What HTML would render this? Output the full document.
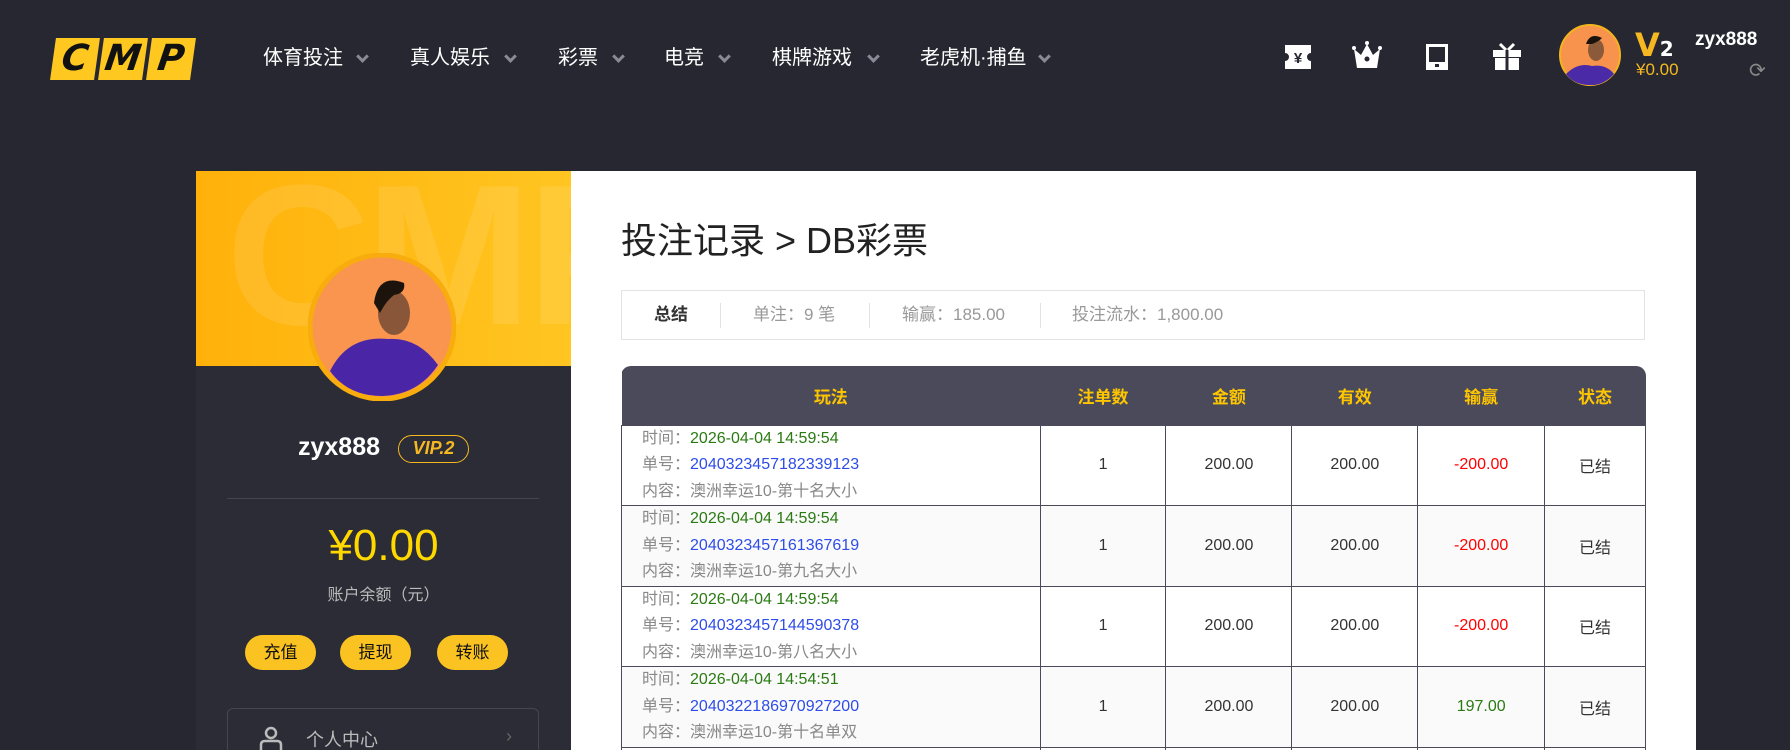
<!DOCTYPE html>
<html><head><meta charset="utf-8"><style>
*{margin:0;padding:0;box-sizing:border-box}
html,body{width:1790px;height:750px;overflow:hidden}
body{background:#272731;font-family:"Liberation Sans","Noto Sans CJK SC",sans-serif;position:relative}
.abs{position:absolute}
.nav{position:absolute;top:45px;color:#fff;font-size:20px;line-height:26px}
.chev{position:absolute;top:52px;width:9px;height:9px;border-right:3px solid #8a8a96;border-bottom:3px solid #8a8a96;transform:rotate(45deg)}
.lg{position:absolute;top:38px;width:44px;height:42px;background:#ffc820;transform:skewX(-8deg);color:#111;font-weight:bold;font-style:italic;font-size:36px;text-align:center;line-height:42px;font-family:"DejaVu Sans",sans-serif}
.btn{position:absolute;width:71px;height:35px;background:#fbc321;border-radius:18px;color:#111;font-size:17px;text-align:center;line-height:35px}
.tw{position:absolute;left:621px;top:366px;width:1025px;height:384px;overflow:hidden;border-radius:10px 10px 0 0}
table{border-collapse:collapse;width:1025px;font-size:16px}
th{background:#4a4a5a;color:#ffc600;height:59px;font-weight:bold;font-size:17px}
td{border:1px solid #4a4a5a;height:79px;text-align:center;color:#333;vertical-align:middle}
td.l{text-align:left;padding-left:20px;line-height:26.5px;color:#888}
.g{color:#2a7a12}.b{color:#2e4ce8}.r{color:#f00}
tr.alt td{background:#fafafa}
</style></head><body>
<div class="lg" style="left:53px">C</div><div class="lg" style="left:101px">M</div><div class="lg" style="left:149px">P</div>
<div class="nav" style="left:263px">体育投注</div><div class="chev" style="left:358px"></div>
<div class="nav" style="left:410px">真人娱乐</div><div class="chev" style="left:506px"></div>
<div class="nav" style="left:558px">彩票</div><div class="chev" style="left:614px"></div>
<div class="nav" style="left:664px">电竞</div><div class="chev" style="left:720px"></div>
<div class="nav" style="left:772px">棋牌游戏</div><div class="chev" style="left:869px"></div>
<div class="nav" style="left:920px">老虎机·捕鱼</div><div class="chev" style="left:1040px"></div>
<svg class="abs" style="left:1285px;top:45px" width="26" height="24" viewBox="0 0 26 24"><path d="M0 0H26V8A4 4 0 0 0 26 16V24H0V16A4 4 0 0 0 0 8Z" fill="#fff"/><text x="13" y="18" font-size="15" font-weight="bold" text-anchor="middle" fill="#272731">¥</text></svg>
<svg class="abs" style="left:1352px;top:41px" width="30" height="28" viewBox="0 0 30 28"><path d="M2 8L9 14L15 3L21 14L28 8L25 27H5Z" fill="#fff"/><circle cx="15" cy="2" r="2" fill="#fff"/><circle cx="2" cy="7" r="2" fill="#fff"/><circle cx="28" cy="7" r="2" fill="#fff"/><circle cx="15" cy="18" r="2.5" fill="#272731"/></svg>
<svg class="abs" style="left:1426px;top:44px" width="22" height="26" viewBox="0 0 22 26"><rect x="1.5" y="1.5" width="19" height="23" fill="none" stroke="#fff" stroke-width="3"/><rect x="1" y="18" width="20" height="8" fill="#fff"/><rect x="9" y="20" width="4" height="3" fill="#272731"/></svg>
<svg class="abs" style="left:1493px;top:42px" width="28" height="28" viewBox="0 0 28 28"><path d="M7 2L13 8M21 2L15 8" stroke="#fff" stroke-width="3"/><rect x="0" y="8" width="28" height="7" fill="#fff"/><rect x="2" y="16" width="24" height="12" fill="#fff"/><rect x="12.5" y="8" width="3" height="20" fill="#272731"/></svg>
<svg class="abs" style="left:1558px;top:24px" width="64" height="62" viewBox="0 0 64 62"><circle cx="32" cy="31" r="30" fill="#f7934c" stroke="#f3b41f" stroke-width="2"/><path d="M8 50Q20 38 34 42Q48 40 56 50Q45 62 32 61Q16 61 8 50Z" fill="#4b2aa8"/><ellipse cx="38" cy="26" rx="8" ry="11" fill="#8a5a3a"/><path d="M28 20Q32 8 44 14Q40 18 34 20Z" fill="#1a120c"/></svg>
<div class="abs" style="left:1635px;top:26px;color:#f5b820;font-size:32px;font-weight:bold;font-family:'DejaVu Sans',sans-serif">V<span style="color:#fff;font-size:20px">2</span></div>
<div class="abs" style="left:1636px;top:60px;color:#f5b820;font-size:17px">¥0.00</div>
<div class="abs" style="left:1695px;top:29px;color:#fff;font-size:19px;font-weight:bold">zyx888</div>
<div class="abs" style="left:1749px;top:58px;color:#888;font-size:20px">⟳</div>

<div class="abs" style="left:196px;top:171px;width:375px;height:579px;background:#2c2c36;overflow:hidden">
 <div class="abs" style="left:0;top:0;width:375px;height:195px;background:linear-gradient(90deg,#ffb10a,#ffc521);overflow:hidden"><div style="position:absolute;left:30px;top:-30px;font-size:200px;font-weight:bold;color:rgba(255,255,255,.1);letter-spacing:-5px">CMP</div></div>
 <svg class="abs" style="left:112px;top:82px" width="148" height="148" viewBox="0 0 148 148"><circle cx="74" cy="74" r="72" fill="#f9954f" stroke="#f8ac0e" stroke-width="5"/><path d="M22 118Q40 82 80 86Q110 84 130 112Q110 142 74 143Q40 143 22 118Z" fill="#4a25a6"/><ellipse cx="86" cy="60" rx="16" ry="22" fill="#8a5639"/><path d="M66 50Q70 20 96 30Q98 40 86 42Q78 48 72 60Z" fill="#1b130c"/></svg>
 <div class="abs" style="left:102px;top:262px;color:#fff;font-size:25px;font-weight:bold">zyx888</div>
 <div class="abs" style="left:202px;top:264px;width:71px;height:28px;border:1.5px solid #f5b820;border-radius:14px;color:#f5b820;font-size:18px;font-weight:bold;font-style:italic;text-align:center;line-height:25px">VIP.2</div>
 <div class="abs" style="left:31px;top:327px;width:312px;height:1px;background:#454552"></div>
 <div class="abs" style="left:0;top:350px;width:375px;text-align:center;color:#ffd800;font-size:44px">¥0.00</div>
 <div class="abs" style="left:0;top:410px;width:375px;text-align:center;color:#bbb;font-size:16px">账户余额（元）</div>
 <div class="btn" style="left:49px;top:464px">充值</div><div class="btn" style="left:144px;top:464px">提现</div><div class="btn" style="left:241px;top:464px">转账</div>
 <div class="abs" style="left:31px;top:537px;width:312px;height:60px;border:1px solid #464652;border-radius:6px"></div>
 <svg class="abs" style="left:63px;top:555px" width="24" height="26" viewBox="0 0 24 26"><circle cx="12" cy="7" r="5" fill="none" stroke="#bbb" stroke-width="2.5"/><path d="M2 26V19Q2 15 6 15H18Q22 15 22 19V26" fill="none" stroke="#bbb" stroke-width="2.5"/></svg>
 <div class="abs" style="left:110px;top:555px;color:#bbb;font-size:18px">个人中心</div>
 <div class="abs" style="left:310px;top:555px;color:#666;font-size:18px">›</div>
</div>

<div class="abs" style="left:571px;top:171px;width:1125px;height:579px;background:#fff"></div>
<div class="abs" style="left:621px;top:212px;color:#222;font-size:36px">投注记录 &gt; DB彩票</div>
<div class="abs" style="left:621px;top:290px;width:1024px;height:50px;border:1px solid #e3e3e3;font-size:17px;color:#999;line-height:48px">
 <span class="abs" style="left:32px;color:#333;font-weight:bold">总结</span>
 <span class="abs" style="left:98px;top:12px;width:1px;height:25px;background:#e3e3e3"></span>
 <span class="abs" style="left:131px">单注：9 笔</span>
 <span class="abs" style="left:247px;top:12px;width:1px;height:25px;background:#e3e3e3"></span>
 <span class="abs" style="left:280px">输赢：185.00</span>
 <span class="abs" style="left:418px;top:12px;width:1px;height:25px;background:#e3e3e3"></span>
 <span class="abs" style="left:450px">投注流水：1,800.00</span>
</div>
<div class="tw"><table>
<colgroup><col style="width:419px"><col style="width:126px"><col style="width:126px"><col style="width:126px"><col style="width:127px"><col style="width:101px"></colgroup>
<tr><th>玩法</th><th>注单数</th><th>金额</th><th>有效</th><th>输赢</th><th>状态</th></tr>
<tr><td class="l">时间：<span class="g">2026-04-04 14:59:54</span><br>单号：<span class="b">2040323457182339123</span><br>内容：澳洲幸运10-第十名大小</td><td>1</td><td>200.00</td><td>200.00</td><td class="r">-200.00</td><td>已结</td></tr>
<tr class="alt"><td class="l">时间：<span class="g">2026-04-04 14:59:54</span><br>单号：<span class="b">2040323457161367619</span><br>内容：澳洲幸运10-第九名大小</td><td>1</td><td>200.00</td><td>200.00</td><td class="r">-200.00</td><td>已结</td></tr>
<tr><td class="l">时间：<span class="g">2026-04-04 14:59:54</span><br>单号：<span class="b">2040323457144590378</span><br>内容：澳洲幸运10-第八名大小</td><td>1</td><td>200.00</td><td>200.00</td><td class="r">-200.00</td><td>已结</td></tr>
<tr class="alt"><td class="l">时间：<span class="g">2026-04-04 14:54:51</span><br>单号：<span class="b">2040322186970927200</span><br>内容：澳洲幸运10-第十名单双</td><td>1</td><td>200.00</td><td>200.00</td><td class="g">197.00</td><td>已结</td></tr>
<tr><td class="l">时间：<span class="g">2026-04-04 14:54:51</span><br>单号：<span class="b">2040322186970927100</span><br>内容：澳洲幸运10-第九名单双</td><td>1</td><td>200.00</td><td>200.00</td><td class="g">197.00</td><td>已结</td></tr>
</table></div>
</body></html>
